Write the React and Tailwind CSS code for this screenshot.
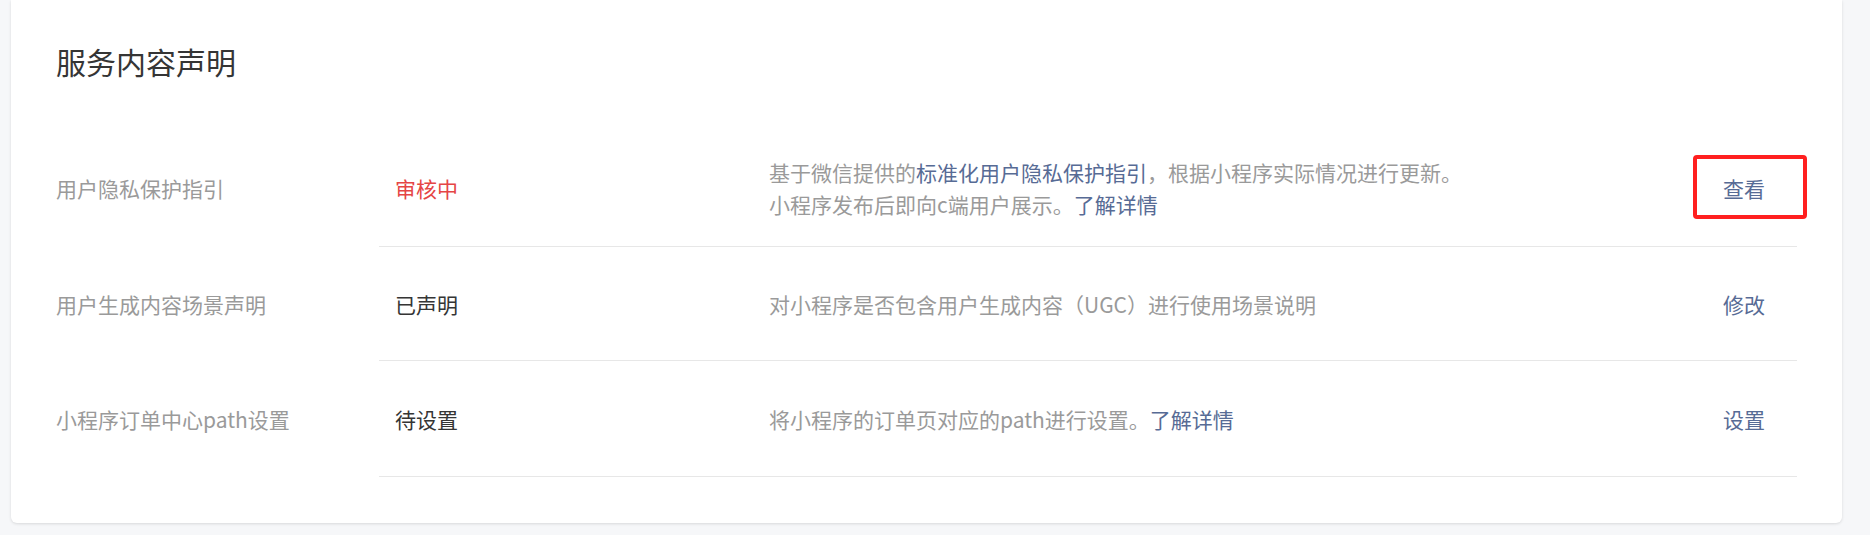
const rows = [
  {
    label: "用户隐私保护指引",
    status: "审核中",
    statusClass: "text-[#e54545]",
    desc: (
      <>
        <div>
          基于微信提供的<a className="text-[#576b95]">标准化用户隐私保护指引</a>，根据小程序实际情况进行更新。
        </div>
        <div>
          小程序发布后即向c端用户展示。<a className="text-[#576b95]">了解详情</a>
        </div>
      </>
    ),
    action: "查看",
    highlight: true,
    height: "h-[118px]",
  },
  {
    label: "用户生成内容场景声明",
    status: "已声明",
    statusClass: "text-[#353535]",
    desc: <div>对小程序是否包含用户生成内容（UGC）进行使用场景说明</div>,
    action: "修改",
    height: "h-[114px]",
  },
  {
    label: "小程序订单中心path设置",
    status: "待设置",
    statusClass: "text-[#353535]",
    desc: (
      <div>
        将小程序的订单页对应的path进行设置。<a className="text-[#576b95]">了解详情</a>
      </div>
    ),
    action: "设置",
    height: "h-[116px]",
  },
];

export default function App() {
  return (
    <div
      className="w-[1870px] h-[535px] bg-[#f6f7f9] pl-[11px] pr-[28px] overflow-hidden"
      style={{ fontFamily: '"Noto Sans CJK SC", "Noto Sans", sans-serif' }}
    >
      <div className="bg-white rounded-b-[6px] shadow-[0_1px_3px_rgba(0,0,0,0.12)] px-[45px] pt-[40px] pb-[46px]">
        <h2 className="text-[30px] leading-[42px] text-[#353535] font-normal mb-[47px]">服务内容声明</h2>

        <div className="text-[21px] leading-[32px]">
          {rows.map((row) => (
            <div key={row.label} className={`flex ${row.height}`}>
              <div className="w-[323px] flex items-center text-[#9a9a9a]">{row.label}</div>
              <div className="flex-1 flex items-center border-b border-[#e7e7e7]">
                <div className={`w-[390px] pl-[16px] ${row.statusClass}`}>{row.status}</div>
                <div className="flex-1 text-[#9a9a9a]">{row.desc}</div>
                <div className="pr-[32px]">
                  <span className="relative inline-block text-[#576b95]">
                    {row.action}
                    {row.highlight && (
                      <span className="absolute left-[-30px] right-[-42px] top-[-17px] bottom-[-15px] border-4 border-[#ff1f1f] rounded-[4px]" />
                    )}
                  </span>
                </div>
              </div>
            </div>
          ))}
        </div>
      </div>
    </div>
  );
}
